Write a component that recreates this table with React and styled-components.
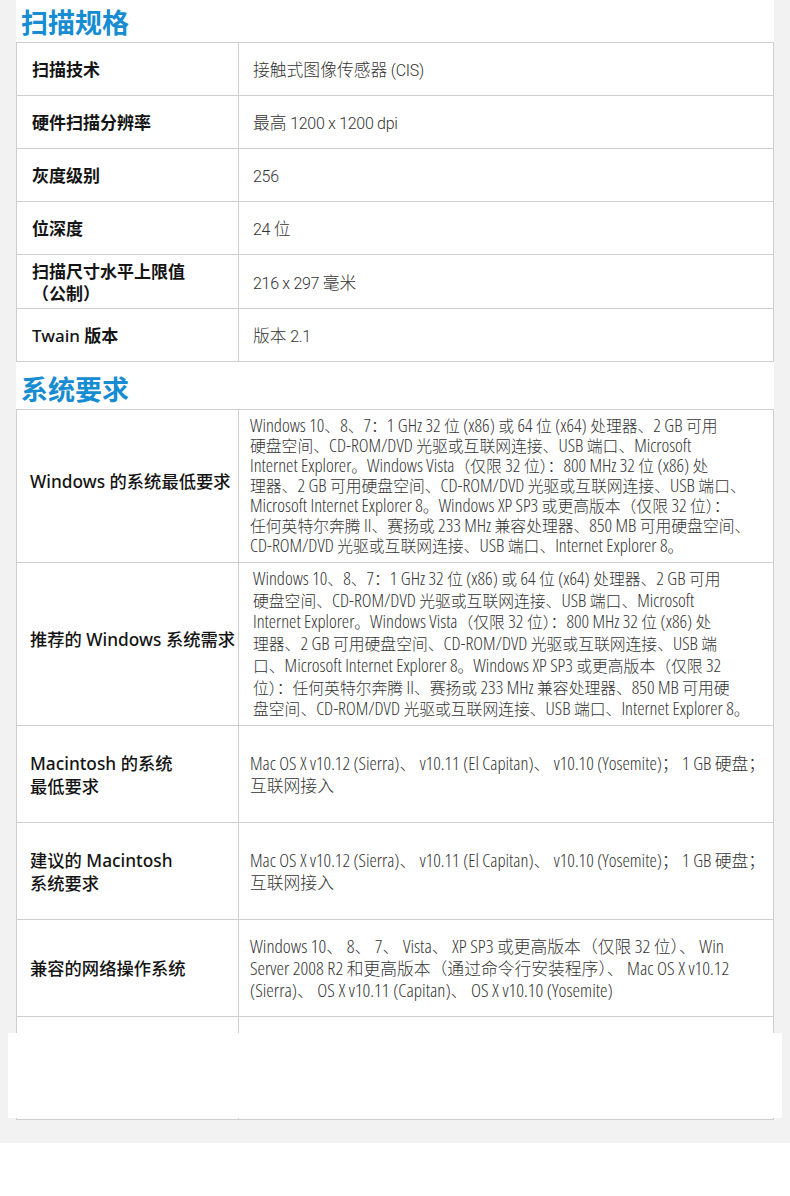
import React from "react";
import styled, { createGlobalStyle } from "styled-components";

const GlobalStyle = createGlobalStyle`
  body {
    margin: 0;
    background: #ffffff;
    font-family: "Noto Sans", "Noto Sans CJK SC", sans-serif;
  }
`;

const scanSpecs = [
  { label: ["扫描技术"], value: ["接触式图像传感器 (CIS)"], h: 53 },
  { label: ["硬件扫描分辨率"], value: ["最高 1200 x 1200 dpi"], h: 53 },
  { label: ["灰度级别"], value: ["256"], h: 53 },
  { label: ["位深度"], value: ["24 位"], h: 53 },
  { label: ["扫描尺寸水平上限值", "（公制）"], value: ["216 x 297 毫米"], h: 54 },
  { label: ["Twain 版本"], value: ["版本 2.1"], h: 53 },
];

const systemSpecs = [
  {
    label: ["Windows 的系统最低要求"],
    lift: true,
    pad: 11,
    lh: 20,
    size: 15.8,
    latin: { size: 18.5, track: 0 },
    h: 153,
    value: [
      "Windows 10、8、7：1 GHz 32 位 (x86) 或 64 位 (x64) 处理器、2 GB 可用",
      "硬盘空间、CD-ROM/DVD 光驱或互联网连接、USB 端口、Microsoft",
      "Internet Explorer。Windows Vista（仅限 32 位）：800 MHz 32 位 (x86) 处",
      "理器、2 GB 可用硬盘空间、CD-ROM/DVD 光驱或互联网连接、USB 端口、",
      "Microsoft Internet Explorer 8。Windows XP SP3 或更高版本（仅限 32 位）：",
      "任何英特尔奔腾 II、赛扬或 233 MHz 兼容处理器、850 MB 可用硬盘空间、",
      "CD-ROM/DVD 光驱或互联网连接、USB 端口、Internet Explorer 8。",
    ],
  },
  {
    label: ["推荐的 Windows 系统需求"],
    lift: true,
    pad: 14,
    lh: 21.8,
    size: 15.8,
    latin: { size: 18.5, track: 0 },
    h: 163,
    value: [
      "Windows 10、8、7：1 GHz 32 位 (x86) 或 64 位 (x64) 处理器、2 GB 可用",
      "硬盘空间、CD-ROM/DVD 光驱或互联网连接、USB 端口、Microsoft",
      "Internet Explorer。Windows Vista（仅限 32 位）：800 MHz 32 位 (x86) 处",
      "理器、2 GB 可用硬盘空间、CD-ROM/DVD 光驱或互联网连接、USB 端",
      "口、Microsoft Internet Explorer 8。Windows XP SP3 或更高版本（仅限 32",
      "位）：任何英特尔奔腾 II、赛扬或 233 MHz 兼容处理器、850 MB 可用硬",
      "盘空间、CD-ROM/DVD 光驱或互联网连接、USB 端口、Internet Explorer 8。",
    ],
  },
  {
    label: ["Macintosh 的系统", "最低要求"],
    pad: 11,
    lh: 22,
    latin: { size: 18.6, track: 0 },
    h: 97,
    value: [
      "Mac OS X v10.12 (Sierra)、 v10.11 (El Capitan)、 v10.10 (Yosemite)； 1 GB 硬盘；",
      "互联网接入",
    ],
  },
  {
    label: ["建议的 Macintosh", "系统要求"],
    pad: 11,
    lh: 22,
    latin: { size: 18.6, track: 0 },
    h: 97,
    value: [
      "Mac OS X v10.12 (Sierra)、 v10.11 (El Capitan)、 v10.10 (Yosemite)； 1 GB 硬盘；",
      "互联网接入",
    ],
  },
  {
    label: ["兼容的网络操作系统"],
    pad: 11,
    lh: 22,
    latin: { size: 19, track: 0 },
    h: 97,
    value: [
      "Windows 10、 8、 7、 Vista、 XP SP3 或更高版本（仅限 32 位）、 Win",
      "Server 2008 R2 和更高版本（通过命令行安装程序）、 Mac OS X v10.12",
      "(Sierra)、 OS X v10.11 (Capitan)、 OS X v10.10 (Yosemite)",
    ],
  },
  { label: [], pad: 11, lh: 22, h: 103, value: [] },
];

// split a line into latin and CJK runs so latin text can use its own face
const CJK = /([\u3000-\u303f\u4e00-\u9fff\uff00-\uffef]+)/;

function Runs({ text, as: Part, latin }) {
  return text.split(CJK).map((part, i) =>
    part === "" ? null : CJK.test(part) ? (
      <React.Fragment key={i}>{part}</React.Fragment>
    ) : (
      <Part key={i} $condensed={!!latin} $size={latin?.size} $track={latin?.track}>
        {part}
      </Part>
    )
  );
}

function SpecTable({ rows, strong }) {
  return (
    <Table>
      {rows.map((row, index) => (
        <Row key={index} $h={row.h}>
          <Label $strong={strong} $lift={row.lift}>
            {row.label.map((line) => (
              <Line key={line}>
                <Runs text={line} as={LabelLatin} />
              </Line>
            ))}
          </Label>
          <Value $pad={row.pad ?? 14} $lh={row.lh ?? 22} $size={row.size ?? 16.8}>
            {row.value.map((line, i) => (
              <Line key={i}>
                <Runs text={line} as={Latin} latin={row.latin} />
              </Line>
            ))}
          </Value>
        </Row>
      ))}
    </Table>
  );
}

export default function App() {
  return (
    <Page>
      <GlobalStyle />
      <Panel>
        <SectionTitle $top={2}>扫描规格</SectionTitle>
        <SpecTable rows={scanSpecs} strong />
        <SectionTitle $top={7}>系统要求</SectionTitle>
        <SpecTable rows={systemSpecs} />
      </Panel>
      <Cover />
    </Page>
  );
}

const Page = styled.div`
  position: relative;
  background: #f2f2f2;
  padding: 0 16px 23px;
`;

const Panel = styled.div`
  background: #ffffff;
`;

const SectionTitle = styled.h2`
  margin: 0;
  padding: ${(p) => p.$top}px 0 0 5px;
  font-family: "Noto Sans CJK SC", sans-serif;
  font-size: 27px;
  line-height: 40px;
  font-weight: 700;
  color: #168cd2;
`;

const Table = styled.div`
  border: 1px solid #cfcfcf;
  border-bottom: none;
`;

const Row = styled.div`
  display: grid;
  grid-template-columns: 222px 1fr;
  height: ${(p) => p.$h}px;
  box-sizing: border-box;
  border-bottom: 1px solid #cfcfcf;
`;

const Label = styled.div`
  display: flex;
  flex-direction: column;
  justify-content: center;
  padding: 0 0 ${(p) => (p.$lift ? 10 : 0)}px ${(p) => (p.$strong ? 15 : 13)}px;
  border-right: 1px solid #cfcfcf;
  font-family: "Noto Sans CJK SC", sans-serif;
  font-size: ${(p) => (p.$strong ? 17 : 17.3)}px;
  line-height: 22px;
  font-weight: ${(p) => (p.$strong ? 700 : 500)};
  color: #141414;
  white-space: nowrap;
`;

const LabelLatin = styled.span`
  font-family: "Noto Sans", sans-serif;
  font-weight: 500;
`;

const Value = styled.div`
  display: flex;
  flex-direction: column;
  justify-content: center;
  padding-left: ${(p) => p.$pad}px;
  font-family: "Noto Sans CJK SC", sans-serif;
  font-size: ${(p) => p.$size}px;
  line-height: ${(p) => p.$lh}px;
  font-weight: 300;
  color: #333333;
  white-space: nowrap;
`;

const Latin = styled.span`
  font-family: ${(p) => (p.$condensed ? '"Open Sans"' : "Roboto")}, sans-serif;
  font-size: ${(p) => (p.$condensed ? p.$size : 16)}px;
  font-weight: 300;
  font-stretch: ${(p) => (p.$condensed ? "75%" : "normal")};
  letter-spacing: ${(p) => (p.$condensed ? p.$track : -0.3)}px;
  line-height: 1;
  color: #333333;
`;

const Line = styled.span`
  display: block;
`;

const Cover = styled.div`
  position: absolute;
  left: 8px;
  right: 8px;
  bottom: 25px;
  height: 85px;
  background: #ffffff;
`;
